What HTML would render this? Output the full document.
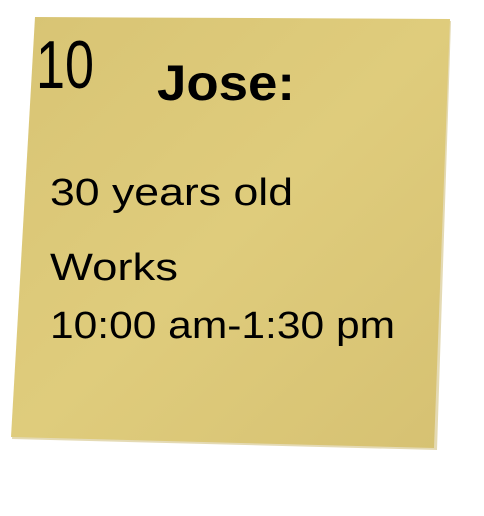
<!DOCTYPE html>
<html><head><meta charset="utf-8"><style>
html,body{margin:0;padding:0;background:#fff;width:484px;height:516px;overflow:hidden}
</style></head><body>
<svg width="484" height="516" viewBox="0 0 484 516" xmlns="http://www.w3.org/2000/svg">
<defs>
<linearGradient id="g" x1="0" y1="0" x2="1" y2="1">
<stop offset="0" stop-color="#d8c474"/>
<stop offset="0.5" stop-color="#dfcc7c"/>
<stop offset="1" stop-color="#d6c172"/>
</linearGradient>
</defs>
<polygon points="36,19 450,20 436,449 11,438" fill="#c9b56a" transform="translate(1,1)" opacity="0.5"/>
<polygon points="35,17 450,19 434,448 11,437" fill="url(#g)"/>
<g font-family="'Liberation Sans', sans-serif" fill="#000">
<text x="36" y="88" font-size="68" font-weight="300" textLength="58" lengthAdjust="spacingAndGlyphs" style="font-weight:100" stroke="none">10</text>
<text x="157" y="100" font-size="50" font-weight="bold" textLength="138" lengthAdjust="spacingAndGlyphs">Jose:</text>
<text x="50" y="205" font-size="38" textLength="243" lengthAdjust="spacingAndGlyphs">30 years old</text>
<text x="50" y="280" font-size="38" textLength="128" lengthAdjust="spacingAndGlyphs">Works</text>
<text x="50" y="338" font-size="38" textLength="345" lengthAdjust="spacingAndGlyphs">10:00 am-1:30 pm</text>
</g>
</svg>
</body></html>
